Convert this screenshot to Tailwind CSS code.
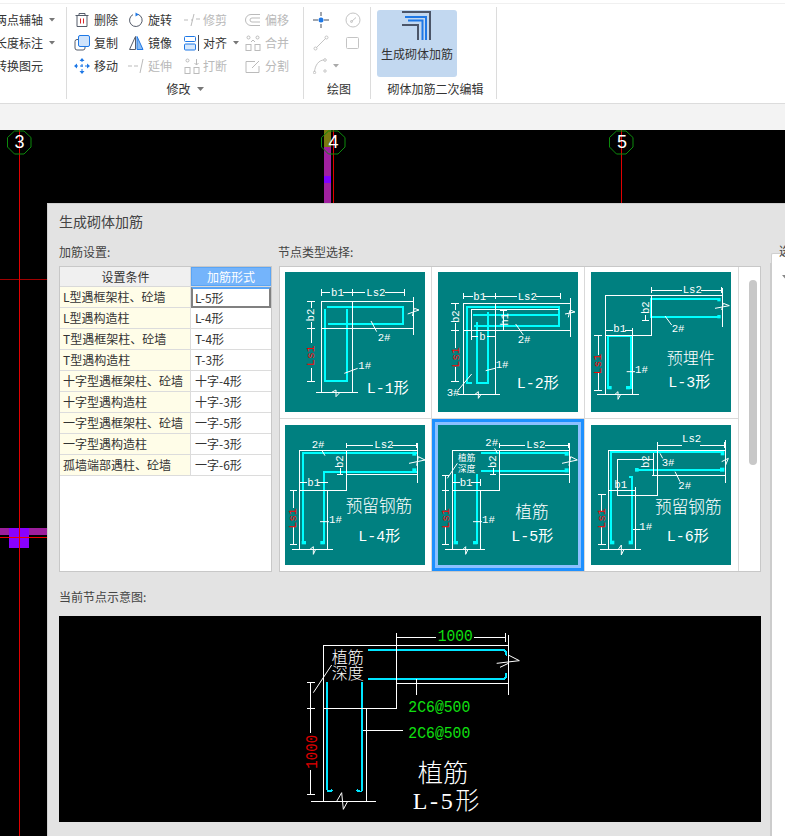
<!doctype html>
<html lang="zh-CN">
<head>
<meta charset="utf-8">
<script src="https://cdn.jsdelivr.net/npm/@tailwindcss/browser@4"></script>
</head>
<body class="m-0">
<div class="w-[785px] h-[836px] overflow-hidden flex flex-col bg-white text-[12px] leading-none text-[#333] font-['Noto_Sans_CJK_SC','Noto_Sans',sans-serif]">

  <!-- ribbon -->
  <div class="h-[104px] shrink-0 bg-white border-b border-[#dcdcdc] relative">
    <div class="h-[4px] border-b border-[#f0f0f0]"></div>
    <div class="flex h-[92px] mt-[3px]">
      <!-- group 1 -->
      <div class="w-[67px] border-r border-[#dcdcdc] overflow-hidden pt-px">
        <div class="ml-[-5px] w-[70px] flex flex-col">
          <div class="h-[23px] flex items-center gap-[6px]"><span>两点辅轴</span><svg width="6" height="4" viewBox="0 0 6 4"><path d="M0 0H6L3 3.5Z" fill="#777"/></svg></div>
          <div class="h-[23px] flex items-center gap-[6px]"><span>长度标注</span><svg width="6" height="4" viewBox="0 0 6 4"><path d="M0 0H6L3 3.5Z" fill="#777"/></svg></div>
          <div class="h-[23px] flex items-center"><span>转换图元</span></div>
        </div>
      </div>
      <!-- group 2 -->
      <div class="w-[237px] border-r border-[#dcdcdc] flex flex-col justify-between">
        <div class="grid grid-cols-[54px_56px_61px_58px] pl-[7px] pt-px">
          <div class="h-[23px] flex items-center gap-[4px]">
            <svg width="16" height="16" viewBox="0 0 16 16" fill="none"><path d="M1.5 3.5H14.5M5 3V1.500H11V3M3 3.500V14.500H13V3.500" stroke="#555c6a"/><path d="M6.500 6.500V11.500M9.500 6.500V11.500" stroke="#d9262c"/></svg><span>删除</span></div>
          <div class="h-[23px] flex items-center gap-[4px]">
            <svg width="16" height="16" viewBox="0 0 16 16" fill="none"><path d="M10 2.300A6.300 6.300 0 1 1 5 2.600" stroke="#555c6a"/><path d="M7.500 0.500L11 2.500L7.500 4.500Z" fill="#1e78e6"/></svg><span>旋转</span></div>
          <div class="h-[23px] flex items-center gap-[3px] text-[#b9b9b9]">
            <svg width="16" height="16" viewBox="0 0 16 16" fill="none"><path d="M0 8H4M12 7H16M7 8H9" stroke="#bbb"/><path d="M7 14L10 2" stroke="#bbb"/></svg><span>修剪</span></div>
          <div class="h-[23px] flex items-center gap-[4px] text-[#b9b9b9]">
            <svg width="16" height="16" viewBox="0 0 16 16" fill="none"><path d="M15 2.500H6A5.500 5.500 0 0 0 6 13.500H15M15 6H7A2 2 0 0 0 7 10H15" stroke="#bbb"/></svg><span>偏移</span></div>

          <div class="h-[23px] flex items-center gap-[4px]">
            <svg width="16" height="16" viewBox="0 0 16 16" fill="none"><rect x="1" y="4.500" width="10" height="10.500" rx="2" stroke="#555c6a"/><rect x="4.500" y="0.500" width="11" height="11" rx="1.500" fill="#cfe3fb" stroke="#1e78e6"/></svg><span>复制</span></div>
          <div class="h-[23px] flex items-center gap-[4px]">
            <svg width="16" height="16" viewBox="0 0 16 16" fill="none"><path d="M7.500 1.500L1.500 14.500H7.500Z" stroke="#555c6a"/><path d="M9 1.500L15 14.500H9Z" fill="#8bbcf2" stroke="#1e78e6"/></svg><span>镜像</span></div>
          <div class="h-[23px] flex items-center gap-[4px]">
            <svg width="15" height="16" viewBox="0 0 15 16" fill="none"><rect x="0.500" y="1.500" width="11" height="5" rx="1" stroke="#1e78e6"/><rect x="0.500" y="9" width="11" height="6" rx="1" fill="#d6e8fc" stroke="#1e78e6"/><path d="M14.500 0V16" stroke="#444c5a"/></svg><span>对齐</span><svg class="ml-[2px]" width="6" height="4" viewBox="0 0 6 4"><path d="M0 0H6L3 3.500Z" fill="#777"/></svg></div>
          <div class="h-[23px] flex items-center gap-[4px] text-[#b9b9b9]">
            <svg width="16" height="16" viewBox="0 0 16 16" fill="none"><rect x="1" y="9.500" width="5" height="6" stroke="#bbb"/><rect x="10" y="9.500" width="5" height="6" stroke="#bbb"/><circle cx="3.500" cy="2.500" r="1.500" stroke="#bbb"/><circle cx="12.500" cy="2.500" r="1.500" stroke="#bbb"/><path d="M6 7L8 5M10 7L8 5" stroke="#bbb"/></svg><span>合并</span></div>

          <div class="h-[23px] flex items-center gap-[4px]">
            <svg width="16" height="16" viewBox="0 0 16 16" fill="none"><path d="M8 1V15M1 8H15" stroke="#1e78e6" stroke-dasharray="3 2"/><path d="M8 0L10.500 3H5.500ZM8 16L10.500 13H5.500ZM0 8L3 5.500V10.500ZM16 8L13 5.500V10.500Z" fill="#1e78e6"/></svg><span>移动</span></div>
          <div class="h-[23px] flex items-center gap-[4px] text-[#b9b9b9]">
            <svg width="16" height="16" viewBox="0 0 16 16" fill="none"><path d="M0 8H4M6 8H10" stroke="#bbb"/><path d="M12 15L15 1" stroke="#bbb"/></svg><span>延伸</span></div>
          <div class="h-[23px] flex items-center gap-[3px] text-[#b9b9b9]">
            <svg width="16" height="16" viewBox="0 0 16 16" fill="none"><rect x="1" y="9.500" width="5" height="6" stroke="#bbb"/><rect x="10" y="9.500" width="5" height="6" stroke="#bbb"/><circle cx="3.500" cy="2.500" r="1.500" stroke="#bbb"/><path d="M12.500 1V7M10.500 5L12.500 7L14.500 5" stroke="#bbb"/></svg><span>打断</span></div>
          <div class="h-[23px] flex items-center gap-[4px] text-[#b9b9b9]">
            <svg width="16" height="16" viewBox="0 0 16 16" fill="none"><path d="M10 3.500H1V14.500H14V8" stroke="#bbb"/><path d="M7 10L14 3" stroke="#bbb"/></svg><span>分割</span></div>
        </div>
        <div class="h-[20px] flex items-center justify-center gap-[6px]"><span>修改</span><svg width="7" height="4" viewBox="0 0 7 4"><path d="M0 0H7L3.500 4Z" fill="#777"/></svg></div>
      </div>
      <!-- group 3 -->
      <div class="w-[67px] border-r border-[#dcdcdc] flex flex-col justify-between">
        <div class="grid grid-cols-[32px_32px] pl-[1px] pt-px">
          <div class="h-[23px] flex items-center justify-center"><svg width="16" height="16" viewBox="0 0 16 16" fill="none"><path d="M0 8H5M11 8H16M8 0V4M8 12V16" stroke="#444c5a"/><circle cx="8" cy="8" r="2.500" fill="#1e78e6"/></svg></div>
          <div class="h-[23px] flex items-center justify-center"><svg width="16" height="16" viewBox="0 0 16 16" fill="none"><circle cx="8" cy="8" r="7" stroke="#c4c4c4"/><path d="M6.500 9.500L11 5.500" stroke="#c4c4c4"/><circle cx="6.500" cy="9.500" r="1" stroke="#c4c4c4"/></svg></div>
          <div class="h-[23px] flex items-center justify-center"><svg width="16" height="16" viewBox="0 0 16 16" fill="none"><path d="M3 13L13 3" stroke="#c4c4c4"/><circle cx="2.500" cy="13.500" r="1.500" stroke="#c4c4c4"/><circle cx="13.500" cy="2.500" r="1.500" stroke="#c4c4c4"/></svg></div>
          <div class="h-[23px] flex items-center justify-center"><svg width="14" height="14" viewBox="0 0 14 14" fill="none"><rect x="0.500" y="1.500" width="12" height="11" rx="1" stroke="#c4c4c4"/></svg></div>
          <div class="h-[23px] flex items-center justify-start pl-[8px] gap-[3px] col-span-2"><svg width="17" height="16" viewBox="0 0 17 16" fill="none"><path d="M1.500 14C2 7 6 2 11 2" stroke="#c4c4c4"/><circle cx="12" cy="2" r="1.300" stroke="#c4c4c4"/><circle cx="1.500" cy="14.500" r="1.200" stroke="#c4c4c4"/><circle cx="12" cy="13" r="1.200" stroke="#c4c4c4"/></svg><svg width="6" height="4" viewBox="0 0 6 4"><path d="M0 0H6L3 3.500Z" fill="#aaa"/></svg></div>
        </div>
        <div class="h-[20px] flex items-center justify-center pl-[4px]">绘图</div>
      </div>
      <!-- group 4 -->
      <div class="w-[126px] border-r border-[#dcdcdc] flex flex-col justify-between">
        <div class="ml-[6px] mt-[3px] w-[80px] h-[67px] rounded-[3px] bg-[#c2d8f0] flex flex-col items-center">
          <svg width="36" height="32" viewBox="399 10 36 32" fill="none"><path d="M402 12H430V40" stroke="#4b5568" stroke-width="2"/><path d="M405 17H426V40M408 20.500H422.500V40" stroke="#1e78e6" stroke-width="2"/><path d="M402 25H418V40" stroke="#4b5568" stroke-width="2"/></svg>
          <span class="mt-[6px] whitespace-nowrap">生成砌体加筋</span>
        </div>
        <div class="h-[20px] flex items-center justify-center pl-[4px]">砌体加筋二次编辑</div>
      </div>
    </div>
  </div>

  <div class="h-[26px] shrink-0 bg-[#f3f3f3]"></div>

  <!-- canvas -->
  <div class="flex-1 relative bg-black overflow-hidden">
    <svg class="absolute inset-0" width="785" height="706" viewBox="0 130 785 706" fill="none" shape-rendering="crispEdges">
      <path d="M0 279.500H47" stroke="#a00000"/>
      <rect x="324" y="130" width="7" height="73" fill="#a0209f"/>
      <rect x="324" y="130" width="7" height="17" fill="#7a7a10"/>
      <rect x="324" y="176" width="7" height="7" fill="#8000ff"/>
      <rect x="0" y="528" width="47" height="7" fill="#9c1f9c"/>
      <rect x="9" y="528" width="20" height="20" fill="#8a00ff"/>
      <path d="M19.500 130V836M333.500 130V203M621.500 130V203" stroke="#e00000"/>
      <path d="M0 537.500H47" stroke="#f00000"/>
      <g stroke="#0c8a0c" shape-rendering="auto">
        <path d="M14.500 131H24L31 137.500V147L24 154H14.500L7.500 147V137.500Z"/>
        <path d="M328.500 131H338L345 137.500V147L338 154H328.500L321.500 147V137.500Z"/>
        <path d="M616.500 131H626L633 137.500V147L626 154H616.500L609.500 147V137.500Z"/>
      </g>
      <g fill="#fff" font-size="18" text-anchor="middle" shape-rendering="auto" class="font-['Liberation_Sans',sans-serif]">
        <text x="19.500" y="148">3</text>
        <text x="333.500" y="148">4</text>
        <text x="622" y="148">5</text>
      </g>
    </svg>

    <!-- dialog -->
    <div class="absolute left-[47px] top-[73px] right-0 bottom-0 bg-[#e3e3e3] border-t border-l border-[#cfcfcf] flex">
      <div class="w-[702px] ml-[11px] shrink-0 flex flex-col">
        <div class="h-[36px] flex items-center pb-[2px] text-[14px] text-[#444]">生成砌体加筋</div>
        <div class="flex gap-[7px]">
          <!-- left column -->
          <div class="w-[213px] flex flex-col">
            <div class="h-[26px] flex items-center pb-[2px] text-[#444]">加筋设置:</div>
            <div class="h-[306px] bg-white border border-[#c8c8c8]">
              <div class="grid grid-cols-[131px_80px] h-[20px] border-b border-[#d9d9d9]">
                <div class="bg-[#f0f0f0] border-r border-[#d9d9d9] flex items-center justify-center pl-px">设置条件</div>
                <div class="bg-[#74b4fb] border border-[#5aa5f5] text-white flex items-center justify-center">加筋形式</div>
              </div>
              <div class="grid grid-cols-[131px_80px] auto-rows-[21px]">
                <div class="bg-[#fffde8] border-r border-b border-[#dcdcdc] flex items-center pl-[3px]">L型遇框架柱、砼墙</div>
                <div class="border-2 border-[#808080] border-t-[#5aa5f5] flex items-center pl-[2px]">L-5形</div>
                <div class="bg-[#fffde8] border-r border-b border-[#dcdcdc] flex items-center pl-[3px]">L型遇构造柱</div>
                <div class="border-b border-[#dcdcdc] flex items-center pl-[4px]">L-4形</div>
                <div class="bg-[#fffde8] border-r border-b border-[#dcdcdc] flex items-center pl-[3px]">T型遇框架柱、砼墙</div>
                <div class="border-b border-[#dcdcdc] flex items-center pl-[4px]">T-4形</div>
                <div class="bg-[#fffde8] border-r border-b border-[#dcdcdc] flex items-center pl-[3px]">T型遇构造柱</div>
                <div class="border-b border-[#dcdcdc] flex items-center pl-[4px]">T-3形</div>
                <div class="bg-[#fffde8] border-r border-b border-[#dcdcdc] flex items-center pl-[3px]">十字型遇框架柱、砼墙</div>
                <div class="border-b border-[#dcdcdc] flex items-center pl-[4px]">十字-4形</div>
                <div class="bg-[#fffde8] border-r border-b border-[#dcdcdc] flex items-center pl-[3px]">十字型遇构造柱</div>
                <div class="border-b border-[#dcdcdc] flex items-center pl-[4px]">十字-3形</div>
                <div class="bg-[#fffde8] border-r border-b border-[#dcdcdc] flex items-center pl-[3px]">一字型遇框架柱、砼墙</div>
                <div class="border-b border-[#dcdcdc] flex items-center pl-[4px]">一字-5形</div>
                <div class="bg-[#fffde8] border-r border-b border-[#dcdcdc] flex items-center pl-[3px]">一字型遇构造柱</div>
                <div class="border-b border-[#dcdcdc] flex items-center pl-[4px]">一字-3形</div>
                <div class="bg-[#fffde8] border-r border-b border-[#dcdcdc] flex items-center pl-[3px]">孤墙端部遇柱、砼墙</div>
                <div class="border-b border-[#dcdcdc] flex items-center pl-[4px]">一字-6形</div>
              </div>
            </div>
          </div>
          <!-- right column -->
          <div class="w-[482px] flex flex-col">
            <div class="h-[26px] flex items-center pb-[3px] -ml-px text-[#444]">节点类型选择:</div>
            <div class="h-[306px] bg-white border border-[#c8c8c8] flex">
              <div class="grid grid-cols-[152px_153px_154px] grid-rows-[152px_152px] w-[459px] font-['Liberation_Mono','Noto_Sans_CJK_SC',monospace]">
                <!-- L-1 -->
                <div class="border-r border-b border-[#d9d9d9] pl-[5px] pt-[5px]">
                  <svg class="block bg-[#008080]" width="140" height="140" viewBox="30 96 420 420" fill="none">
                    <g stroke="#00ffff" stroke-width="6" shape-rendering="crispEdges"><path d="M150 207V423H216V207"/><path d="M157 200H385V252H160"/></g>
                    <g stroke="#fff" stroke-width="3" shape-rendering="crispEdges"><path d="M140 157H166M205 157H270M330 157H388M140 147V167M232 147V167M388 147V167"/><path d="M138 457V185H415M232 185V457M123 457H248M138 265H415M415 170V285"/><path d="M108 185V205M108 245V310M108 385V423M95 185H120M95 265H120M95 423H120"/></g>
                    <g stroke="#fff" stroke-width="3"><path d="M398 222L432 210L418 205L412 228M170 457L183 450V470L195 457M288 243L305 275M208 400L248 385"/></g>
                    <g fill="#fff" font-size="32"><text x="168" y="168">b1</text><text x="274" y="168">Ls2</text><text x="308" y="302">2#</text><text x="250" y="387">1#</text><text font-size="45" x="275" y="460">L-1形</text><text transform="rotate(-90 116 225)" x="116" y="225" text-anchor="middle">b2</text></g>
                    <text transform="rotate(-90 116 347)" x="116" y="347" text-anchor="middle" fill="#ff0000" font-size="34">Ls1</text>
                  </svg>
                </div>
                <!-- L-2 -->
                <div class="border-r border-b border-[#d9d9d9] pl-[6px] pt-[5px]">
                  <svg class="block bg-[#008080]" width="140" height="140" viewBox="489 96 420 420" fill="none">
                    <g stroke="#00ffff" stroke-width="6" shape-rendering="crispEdges"><path d="M592 430H576V202H853V258H598"/><path d="M595 225H853"/><path d="M640 215V428H606V245"/></g>
                    <g stroke="#fff" stroke-width="3" shape-rendering="crispEdges"><path d="M565 168H595M628 168H725M782 168H857M565 158V178M660 158V178M857 158V178"/><path d="M565 463V190H885M660 190V463M550 463H675M565 270H885M885 175V290M588 285V208H853M685 208V270M676 210H696"/><path d="M540 190V210M540 250V325M540 380V425M528 190H552M528 270H552M528 425H552M590 290H610M635 290H660M590 280V300"/></g>
                    <g stroke="#fff" stroke-width="3"><path d="M870 222L900 216L885 210L880 232M600 463L610 455V475L618 463M722 252L745 285M632 392L660 385M590 402L550 450"/></g>
                    <g fill="#fff" font-size="32"><text x="595" y="179">b1</text><text x="728" y="179">Ls2</text><text x="613" y="300">b</text><text x="728" y="310">2#</text><text x="662" y="384">1#</text><text x="515" y="467">3#</text><text font-size="45" x="725" y="444">L-2形</text><text transform="rotate(-90 551 230)" x="551" y="230" text-anchor="middle">b2</text><text transform="rotate(-90 698 238)" x="698" y="238" text-anchor="middle">h1</text></g>
                    <text transform="rotate(-90 551 352)" x="551" y="352" text-anchor="middle" fill="#ff0000" font-size="34">Ls1</text>
                  </svg>
                </div>
                <!-- L-3 -->
                <div class="border-r border-b border-[#d9d9d9] pl-[6px] pt-[5px]">
                  <svg class="block bg-[#008080]" width="140" height="140" viewBox="33 96 420 420" fill="none">
                    <g stroke="#00ffff" stroke-width="6" shape-rendering="crispEdges"><path d="M84 448V288H152V448"/><path d="M420 178H213V230H420"/></g>
                    <g fill="#00ffff"><rect x="82" y="438" width="13" height="10"/><rect x="138" y="438" width="13" height="10"/><rect x="412" y="174" width="10" height="10"/><rect x="412" y="225" width="10" height="10"/></g>
                    <g stroke="#fff" stroke-width="3" shape-rendering="crispEdges"><path d="M215 150H305M362 150H424M215 142V160M424 142V160"/><path d="M77 166H427M77 166V463M215 166V286M77 286H215M157 265V463M50 463H177M427 145V262M185 241H207M195 225V241"/><path d="M77 270H100M135 270H157M55 286V345M55 395V450M43 286H67M43 450H67M77 260V280"/></g>
                    <g stroke="#fff" stroke-width="3"><path d="M405 205L448 197L430 190L425 210M105 463L114 455V478L122 463M255 228L275 255M140 395H165"/></g>
                    <g fill="#fff" font-size="32"><text x="100" y="276">b1</text><text x="308" y="158">Ls2</text><text x="275" y="277">2#</text><text x="165" y="398">1#</text><text font-size="48" x="260" y="372" class="font-light">预埋件</text><text font-size="45" x="265" y="440">L-3形</text><text transform="rotate(-90 206 203)" x="206" y="203" text-anchor="middle">b2</text></g>
                    <text transform="rotate(-90 64 372)" x="64" y="372" text-anchor="middle" fill="#ff0000" font-size="34">Ls1</text>
                  </svg>
                </div>
                <!-- L-4 -->
                <div class="border-r border-[#d9d9d9] pl-[5px] pt-[6px]">
                  <svg class="block bg-[#008080]" width="140" height="140" viewBox="30 30 420 420" fill="none">
                    <g stroke="#00ffff" stroke-width="6" shape-rendering="crispEdges"><path d="M85 388V115H425"/><path d="M148 388V170H425"/></g>
                    <g fill="#00ffff"><rect x="80" y="378" width="13" height="10"/><rect x="136" y="378" width="13" height="10"/><rect x="412" y="110" width="12" height="12"/><rect x="412" y="160" width="12" height="12"/></g>
                    <g stroke="#fff" stroke-width="3" shape-rendering="crispEdges"><path d="M215 92H295M352 92H425M215 84V100M425 84V100"/><path d="M73 105H427M73 105V403M215 105V227M73 227H215M158 227V403M50 403H173M215 177H427M427 85V205M185 177H205M195 160V177"/><path d="M73 203H95M130 203H160M55 227V280M55 335V388M45 227H65M45 388H65M73 193V213"/></g>
                    <g stroke="#fff" stroke-width="3"><path d="M402 145L450 135L430 125L425 152M105 403L115 395V418L122 403M140 105L150 122M135 320H162"/></g>
                    <g fill="#fff" font-size="32"><text x="110" y="98">2#</text><text x="298" y="100">Ls2</text><text x="97" y="212">b1</text><text x="162" y="324">1#</text><text font-size="50" x="212" y="292" class="font-light">预留钢筋</text><text font-size="45" x="250" y="378">L-4形</text><text transform="rotate(-90 205 140)" x="205" y="140" text-anchor="middle">b2</text></g>
                    <text transform="rotate(-90 64 310)" x="64" y="310" text-anchor="middle" fill="#ff0000" font-size="34">Ls1</text>
                  </svg>
                </div>
                <!-- L-5 selected -->
                <div class="relative border-r border-[#d9d9d9]">
                  <div class="w-[152px] h-[152px] border-[3px] border-[#1e90ff] bg-[#8cc0ff] p-[3px]">
                  <svg class="block bg-[#008080]" width="140" height="140" viewBox="490 30 420 420" fill="none">
                    <g stroke="#00ffff" stroke-width="6" shape-rendering="crispEdges"><path d="M619 113H880M619 167H880M540 178V388M606 178V388"/></g>
                    <g fill="#00ffff"><rect x="537" y="378" width="13" height="10"/><rect x="595" y="378" width="13" height="10"/><rect x="870" y="110" width="12" height="12"/><rect x="870" y="160" width="12" height="12"/></g>
                    <g stroke="#fff" stroke-width="3" shape-rendering="crispEdges"><path d="M673 92H752M810 92H882M673 84V100M882 84V100"/><path d="M532 105H885M532 105V403M673 105V227M532 227H673M617 227V403M510 403H632M673 177H885M885 85V205M645 177H665M655 160V177"/><path d="M532 203H555M590 203H617M513 180V285M513 335V388M503 180H523M503 227H523M503 388H523M617 193V213"/></g>
                    <g stroke="#fff" stroke-width="3"><path d="M862 145L908 135L888 125L883 152M565 403L573 395V418L580 403M660 100L668 115M595 320H622M548 145L518 190"/></g>
                    <g fill="#fff" font-size="32"><text x="632" y="92">2#</text><text x="755" y="100">Ls2</text><text x="555" y="212">b1</text><text x="622" y="324">1#</text><text font-size="26" x="550" y="137">植筋</text><text font-size="26" x="550" y="170">深度</text><text font-size="50" x="722" y="308" class="font-light">植筋</text><text font-size="45" x="710" y="378">L-5形</text><text transform="rotate(-90 664 140)" x="664" y="140" text-anchor="middle">b2</text></g>
                    <text transform="rotate(-90 522 310)" x="522" y="310" text-anchor="middle" fill="#ff0000" font-size="34">Ls1</text>
                  </svg>
                  </div>
                </div>
                <!-- L-6 -->
                <div class="border-r border-[#d9d9d9] pl-[6px] pt-[6px]">
                  <svg class="block bg-[#008080]" width="140" height="140" viewBox="33 555 420 420" fill="none">
                    <g stroke="#00ffff" stroke-width="6" shape-rendering="crispEdges"><path d="M93 910V637H428"/><path d="M165 690H430"/><path d="M148 712H156V910"/></g>
                    <g fill="#00ffff"><rect x="90" y="902" width="13" height="11"/><rect x="146" y="902" width="13" height="11"/><rect x="422" y="632" width="11" height="14"/><rect x="420" y="683" width="13" height="12"/><rect x="165" y="684" width="11" height="11"/></g>
                    <g stroke="#fff" stroke-width="3" shape-rendering="crispEdges"><path d="M233 615H305M360 615H432M432 605V625"/><path d="M85 632H437M85 632V928M437 600V730M233 605V765M112 658H220M112 658V765H233M215 705H437M167 740V928M60 928H183M85 750H167M220 640V705"/><path d="M65 762V812M65 860V912M53 762H77M53 912H77M160 868H180"/></g>
                    <g stroke="#fff" stroke-width="3"><path d="M425 665L445 655L437 675M115 928L124 915V945L132 928M240 640L248 655M285 695L300 725"/></g>
                    <g fill="#fff" font-size="32"><text x="306" y="606">Ls2</text><text x="103" y="744">b1</text><text x="245" y="677">3#</text><text x="295" y="748">2#</text><text x="178" y="870">1#</text><text font-size="50" x="225" y="820" class="font-light">预留钢筋</text><text font-size="45" x="260" y="902">L-6形</text><text transform="rotate(-90 208 665)" x="208" y="665" text-anchor="middle">b2</text></g>
                    <text transform="rotate(-90 74 835)" x="74" y="835" text-anchor="middle" fill="#ff0000" font-size="34">Ls1</text>
                  </svg>
                </div>
              </div>
              <div class="flex-1 pl-[10px] pt-[13px]">
                <div class="w-[8px] h-[185px] rounded-full bg-[#c8c8c8]"></div>
              </div>
            </div>
          </div>
        </div>
        <div class="h-[44px] flex items-center pt-[6px] text-[#444]">当前节点示意图:</div>
        <!-- preview -->
        <svg class="block bg-black font-['Liberation_Mono','Noto_Sans_CJK_SC',monospace]" width="702" height="206" viewBox="-663 18 2106 618" fill="none">
          <g stroke="#00e5ff" stroke-width="6" shape-rendering="crispEdges"><path d="M265 120H668Q681 120 677 136M265 207H668Q681 207 677 190M142 217V538Q142 550 157 540M246 217V538Q246 550 230 540"/></g>
          <g stroke="#fff" stroke-width="3" shape-rendering="crispEdges"><path d="M350 83H468M582 83H677M350 70V97M677 70V97"/><path d="M131 106H685M131 106V573M350 70V295M131 295H350M260 295V573M93 574H288M350 220H685M685 75V255M410 207V255M248 361H370"/><path d="M91 217V370M91 480V553M80 217H105M80 295H105M80 553H105"/></g>
          <g stroke="#fff" stroke-width="3"><path d="M650 160L718 152L685 135M660 172L685 160M170 574L185 548L190 598L203 574M155 165L100 248"/></g>
          <g fill="#10e010" font-size="52"><text x="473" y="93" textLength="105" lengthAdjust="spacingAndGlyphs">1000</text><text x="385" y="305" textLength="186" lengthAdjust="spacingAndGlyphs">2C6@500</text><text x="385" y="383" textLength="186" lengthAdjust="spacingAndGlyphs">2C6@500</text></g>
          <text transform="rotate(-90 112 425)" x="112" y="425" text-anchor="middle" fill="#e00000" font-size="52" textLength="102" lengthAdjust="spacingAndGlyphs">1000</text>
          <g fill="#fff"><text font-size="48" x="155" y="160" class="font-light">植筋</text><text font-size="48" x="155" y="208" class="font-light">深度</text><text font-size="76" x="413" y="515" class="font-light">植筋</text><text font-size="72" x="398" y="597" textLength="200" class="font-['Liberation_Serif','Noto_Sans_CJK_SC',serif] font-light">L-5形</text></g>
        </svg>
      </div>
      <!-- clipped right panel -->
      <div class="flex-1 ml-[9px] flex flex-col">
        <div class="h-[59px] relative">
          <div class="absolute left-[1px] bottom-0 w-[20px] h-[10px] bg-white border-t border-l border-[#cfcfcf] rounded-tl-[2px]"></div>
          <span class="absolute left-[9px] top-[41px] text-[#444]">选</span>
        </div>
        <div class="flex-1 bg-white border-l-2 border-[#cccccc] pl-[10px] pt-[12px]">
          <svg width="6" height="4" viewBox="0 0 6 4"><path d="M0 0H6L3 3.500Z" fill="#888"/></svg>
        </div>
      </div>
    </div>
  </div>
</div>
</body>
</html>
